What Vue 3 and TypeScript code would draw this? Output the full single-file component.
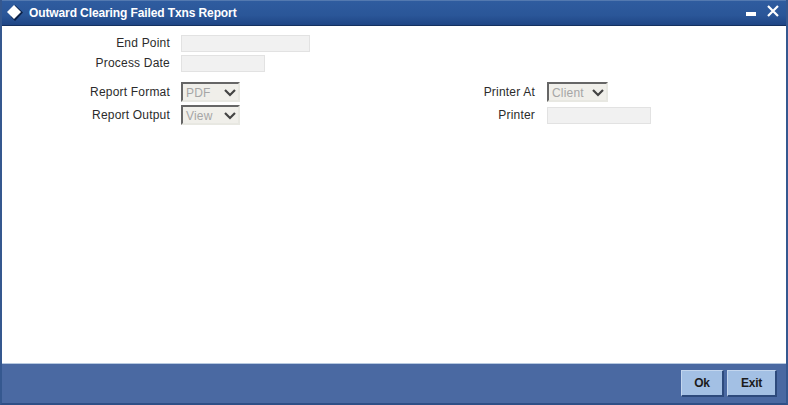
<script setup lang="ts">
const leftRows = [
  { label: 'Report Format', value: 'PDF' },
  { label: 'Report Output', value: 'View' },
]
</script>

<template>
  <div class="window">
    <header class="titlebar">
      <svg class="logo" width="18" height="18" viewBox="0 0 18 18">
        <path d="M9 1 L17 8.5 L9 17 L5 13 Z" fill="#0b2147" />
        <path d="M8 1 L15 8 L8 15 L1 8 Z" fill="#fff" />
      </svg>
      <h1 class="title">Outward Clearing Failed Txns Report</h1>
      <div class="controls">
        <svg class="min" width="10" height="4" viewBox="0 0 10 4"><rect width="10" height="4" fill="#fff" /></svg>
        <svg class="close" width="12" height="12" viewBox="0 0 12 12">
          <path d="M1 1 L11 11 M11 1 L1 11" stroke="#fff" stroke-width="2.2" fill="none" />
        </svg>
      </div>
    </header>

    <main class="body">
      <div class="row first">
        <label class="lbl">End Point</label>
        <input class="inp w129" disabled />
      </div>
      <div class="row second">
        <label class="lbl">Process Date</label>
        <input class="inp w84" disabled />
      </div>
      <div class="bottom">
        <div class="col">
          <div v-for="r in leftRows" :key="r.label" class="row sel-row">
            <label class="lbl">{{ r.label }}</label>
            <div class="sel w59">
              <span>{{ r.value }}</span>
              <svg width="12" height="8" viewBox="0 0 12 8"><path d="M1 1 L6 6 L11 1" stroke="#444" stroke-width="2.2" fill="none" /></svg>
            </div>
          </div>
        </div>
        <div class="col">
          <div class="row sel-row">
            <label class="lbl short">Printer At</label>
            <div class="sel w61">
              <span>Client</span>
              <svg width="12" height="8" viewBox="0 0 12 8"><path d="M1 1 L6 6 L11 1" stroke="#444" stroke-width="2.2" fill="none" /></svg>
            </div>
          </div>
          <div class="row sel-row">
            <label class="lbl short">Printer</label>
            <input class="inp w104" disabled />
          </div>
        </div>
      </div>
    </main>

    <footer class="footer">
      <button class="btn">Ok</button>
      <button class="btn exit">Exit</button>
    </footer>
  </div>
</template>

<style>
html, body { margin: 0; padding: 0; background: #fff; }
</style>

<style scoped>
.window {
  width: 788px;
  height: 405px;
  box-sizing: border-box;
  display: flex;
  flex-direction: column;
  background: #4a69a2;
  border-left: 2px solid #35588f;
  border-right: 2px solid #35588f;
  border-bottom: 2px solid #2f4f86;
  font-family: "Liberation Sans", Arial, sans-serif;
  font-size: 12px;
  color: #2b2b2b;
  overflow: hidden;
}
.titlebar {
  height: 26px;
  flex: none;
  box-sizing: border-box;
  display: flex;
  align-items: center;
  margin: 0 -2px;
  padding: 0 9px 0 6px;
  border-top: 1px solid #5379b0;
  border-bottom: 1px solid #14305f;
  background: linear-gradient(#2f5c9f, #2a5698 60%, #1f4585);
}
.logo { flex: none; }
.title {
  margin: 0 0 0 5px;
  font-size: 12px;
  font-weight: 700;
  letter-spacing: -0.11px;
  color: #fff;
  line-height: 24px;
  flex: 1;
}
.controls { display: flex; align-items: flex-start; gap: 11px; height: 24px; }
.min { margin-top: 11px; }
.close { margin-top: 4px; }
.body {
  flex: 1;
  background: #fff;
  border-bottom: 1px solid #b7c9e0;
  box-sizing: border-box;
  padding-top: 9px;
}
.row { display: flex; align-items: center; }
.first, .second { height: 17px; }
.second { margin-top: 3px; }
.lbl {
  width: 168px;
  text-align: right;
  margin-right: 11px;
  flex: none;
  line-height: 17px;
  letter-spacing: 0.2px;
}
.short { width: 157px; margin-right: 12px; }
.inp {
  box-sizing: border-box;
  height: 17px;
  padding: 0;
  background: #f1f1f1;
  border: 1px solid #e2e2e2;
  border-radius: 0;
  display: block;
}
.w129 { width: 129px; }
.w84 { width: 84px; }
.w104 { width: 104px; }
.bottom { display: flex; margin-top: 10px; }
.col { width: 376px; flex: none; }
.sel-row { height: 20px; }
.sel-row + .sel-row { margin-top: 3px; }
.sel {
  box-sizing: border-box;
  height: 20px;
  background: #f0efea;
  border: 2px solid #e8e8e2;
  border-top-color: #666;
  border-left-color: #666;
  display: flex;
  align-items: center;
  justify-content: space-between;
  padding: 1px 2px 0 3px;
  color: #a6a6a6;
  letter-spacing: 0.2px;
}
.w59 { width: 59px; }
.w61 { width: 61px; }
.footer {
  flex: none;
  height: 39px;
  box-sizing: border-box;
  display: flex;
  justify-content: flex-end;
  gap: 3px;
  padding: 6px 9px 0 0;
}
.btn {
  width: 43px;
  height: 27px;
  box-sizing: border-box;
  background: #a3c0e4;
  border-style: solid;
  border-width: 1px 2px 2px 1px;
  border-color: #c3d6ee #2d4a7c #2d4a7c #c3d6ee;
  font: 700 12px "Liberation Sans", Arial, sans-serif;
  letter-spacing: -0.3px;
  color: #1c1c1c;
  padding: 0;
}
.exit { width: 50px; }
</style>
